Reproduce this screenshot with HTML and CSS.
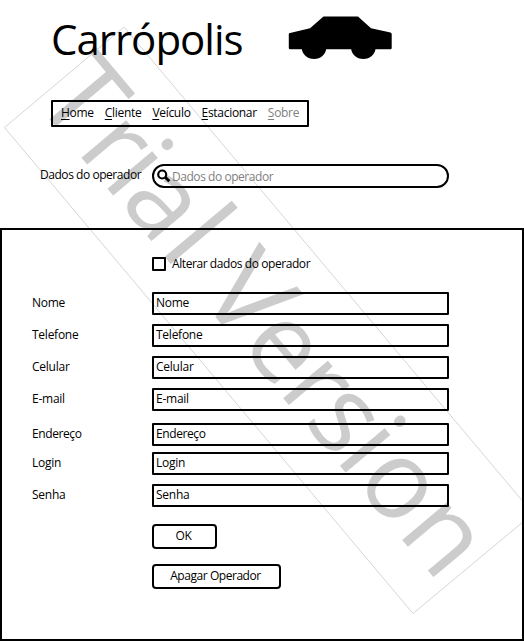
FILE: index.html
```html
<!DOCTYPE html>
<html lang="pt-BR">
<head>
<meta charset="utf-8">
<title>Carrópolis</title>
<link rel="stylesheet" href="styles.css">
</head>
<body>
<svg class="watermark" width="524" height="641" viewBox="0 0 524 641" aria-hidden="true">
  <path class="frame" d="M124 27 4.500 127.500 413 613.500 533 513.500Z"/>
  <text class="trial" transform="translate(34.400 101.500) rotate(50)" x="-3.500 64 104.500 130.500 193 222 252 318 378 417 466 496.500 563">T<tspan class="low">ria</tspan>l V<tspan class="low">ersion</tspan></text>
</svg>
<header class="header">
  <h1 class="title">Carrópolis</h1>
  <svg class="car" width="104" height="44" viewBox="288 16 104 44">
    <path d="M290 33 310 28.300 323.500 16.500H358L371 28.300 390.500 32.500Q391.700 33 391.700 34V48Q391.700 49.300 390.500 49.300H290Q288.800 49.300 288.800 48V34Q288.800 33.200 290 33Z"/>
    <ellipse cx="314" cy="48" rx="12.200" ry="11"/>
    <ellipse cx="363.300" cy="48" rx="12.200" ry="11"/>
  </svg>
</header>
<nav class="menu">
  <a><u>H</u>ome</a><a><u>C</u>liente</a><a><u>V</u>eículo</a><a><u>E</u>stacionar</a><a class="off"><u>S</u>obre</a>
</nav>
<div class="lookup">
  <label class="lookup-label">Dados do operador</label>
  <div class="search">
    <svg width="14" height="14" viewBox="0 0 14 14"><circle cx="5.200" cy="5.500" r="4"/><path d="M8.500 8.500 12.300 12.300"/></svg>
    <span>Dados do operador</span>
  </div>
</div>
<main class="panel">
  <label class="check"><i class="box"></i><span>Alterar dados do operador</span></label>
  <div class="row"><label>Nome</label><div class="field">Nome</div></div>
  <div class="row"><label>Telefone</label><div class="field">Telefone</div></div>
  <div class="row"><label>Celular</label><div class="field">Celular</div></div>
  <div class="row"><label>E-mail</label><div class="field">E-mail</div></div>
  <div class="row address"><label>Endereço</label><div class="field">Endereço</div></div>
  <div class="row"><label>Login</label><div class="field">Login</div></div>
  <div class="row"><label>Senha</label><div class="field">Senha</div></div>
  <div class="actions">
    <button class="ok">OK</button>
    <button class="delete">Apagar Operador</button>
  </div>
</main>
</body>
</html>
```
FILE: styles.css
```css
* { box-sizing: border-box; }
body {
  margin: 0;
  height: 641px;
  display: flex;
  flex-direction: column;
  overflow: hidden;
  background: #fff;
  color: #000;
  font: 12px/16px "Open Sans", "Noto Sans", sans-serif;
  letter-spacing: -0.25px;
  white-space: nowrap;
}
.watermark { position: absolute; top: 0; left: 0; z-index: -1; }
.frame { fill: none; stroke: #d6d6d6; stroke-width: 1; }
.trial { fill: #ccc; font-size: 115px; letter-spacing: 0; }
.low { font-size: 109px; }
.header { display: flex; height: 100px; padding-left: 51px; }
.title {
  width: 237px;
  margin: 10px 0 0;
  font-size: 42px;
  line-height: 58px;
  font-weight: 400;
  letter-spacing: -1px;
}
.car { margin-top: 16px; }
.menu {
  display: flex;
  gap: 11px;
  width: 258px;
  height: 27px;
  margin-left: 51px;
  padding: 3px 8px;
  border: 2px solid #000;
  border-radius: 1px;
  letter-spacing: -0.3px;
}
.menu u { text-underline-offset: 2px; }
.off { color: #808080; }
.lookup { display: flex; height: 24px; margin: 37px 0 40px 40px; letter-spacing: -0.45px; }
.lookup-label { width: 112px; padding-top: 3px; }
.search {
  display: flex;
  align-items: center;
  gap: 1px;
  width: 297px;
  padding-left: 3px;
  border: 2px solid #000;
  border-radius: 12px;
  color: #808080;
}
.search span { padding-top: 1px; }
.search svg { fill: none; stroke: #000; stroke-width: 2.2; }
.search path { stroke-width: 3; }
.panel { height: 413px; padding: 27px 30px 0; border: 2px solid #000; }
.check { display: flex; gap: 6px; height: 14px; margin: 0 0 21px 120px; align-items: center; letter-spacing: -0.42px; }
.box { width: 14px; height: 14px; border: 2px solid #000; border-radius: 1px; }
.row { display: flex; height: 23px; margin-bottom: 9px; }
.row label { width: 120px; padding-top: 3px; }
.field { width: 297px; padding: 1px 2px; border: 2px solid #000; border-radius: 1px; }
.address { margin-top: 12px; margin-bottom: 6px; letter-spacing: -0.4px; }
.actions { display: flex; flex-direction: column; gap: 15px; margin: 17px 0 0 120px; letter-spacing: -0.45px; }
button {
  height: 25px;
  padding: 0 2px 1px 0;
  border: 2px solid #000;
  border-radius: 4px;
  background: transparent;
  color: #000;
  font: inherit;
  letter-spacing: inherit;
}
.ok { width: 65px; }
.delete { width: 129px; }
```
